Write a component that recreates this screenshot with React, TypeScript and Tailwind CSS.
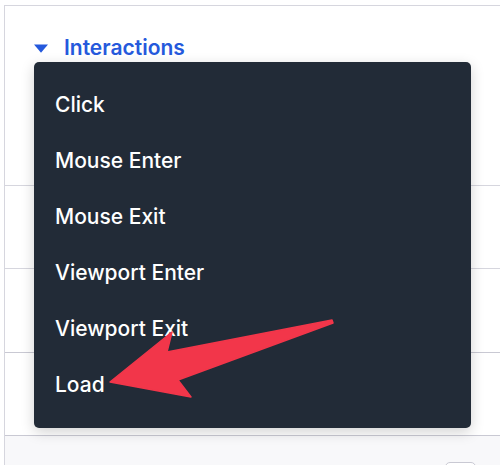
import * as React from "react";

const items = [
  "Click",
  "Mouse Enter",
  "Mouse Exit",
  "Viewport Enter",
  "Viewport Exit",
  "Load",
];

export default function App() {
  return (
    <div
      className="relative w-[500px] h-[465px] overflow-hidden bg-white"
      style={{ fontFamily: "Inter, 'Noto Sans', sans-serif" }}
    >
      {/* Panel behind the dropdown */}
      <div className="ml-[4px] mt-[5px] h-[460px] border-l border-t border-[#d6d6de] flex flex-col">
        <div className="h-[179px] shrink-0 pt-[28px] pl-[29px]">
          <div className="flex items-center gap-[16px] text-[#2559dc]">
            <svg width="14" height="9" viewBox="0 0 14 9" className="shrink-0">
              <path d="M0 0.5 L14 0.5 L7 8.8 Z" fill="currentColor" />
            </svg>
            <span className="text-[21px] font-semibold leading-[28px]">
              Interactions
            </span>
          </div>
        </div>
        <div className="h-[83px] shrink-0 border-t border-[#d6d6de]" />
        <div className="h-[84px] shrink-0 border-t border-[#d6d6de]" />
        <div className="h-[84px] shrink-0 border-t border-b border-[#c9c9d3]" />
        <div className="flex-1 bg-[#f8f8fa] flex justify-end pr-[24px] pt-[26px]">
          <div className="w-[31px] h-[20px] rounded-[5px] border border-[#c9c9d3] bg-white" />
        </div>
      </div>

      {/* Dropdown menu */}
      <div className="absolute left-[34px] top-[62px] w-[437px] h-[366px] rounded-[5px] bg-[#222b37] shadow-[0_4px_14px_rgba(0,0,0,0.18)] pt-[15px]">
        {items.map((item) => (
          <div
            key={item}
            className="h-[56px] flex items-center pl-[21px] text-white text-[21px] font-medium"
          >
            {item}
          </div>
        ))}
      </div>

      {/* Annotation arrow */}
      <svg
        className="absolute left-0 top-0 pointer-events-none"
        width="500"
        height="465"
        viewBox="0 0 500 465"
      >
        <polygon
          points="110,382 172,332 167,352 332,320 333,323 178,380 191,397"
          fill="#f2364a"
          stroke="#f2364a"
          strokeWidth="1.5"
          strokeLinejoin="round"
        />
      </svg>
    </div>
  );
}
